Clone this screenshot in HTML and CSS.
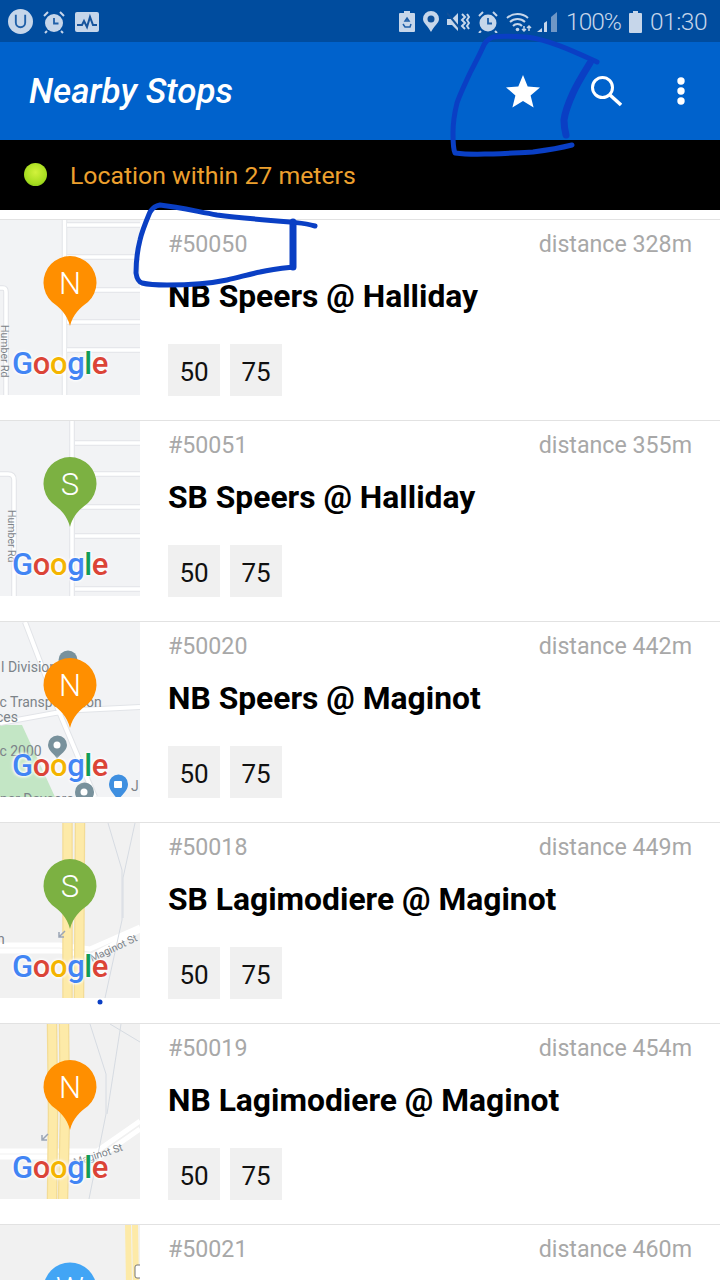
FILE: index.html
```html
<!DOCTYPE html>
<html>

<head>
    <title>Nearby Stops</title>
    <link rel="stylesheet" href="styles.css">
</head>

<body>

    <div class="statusbar">
        <div class="status-group">
            <svg class="st-icon" width="25" height="25" viewBox="0 0 24 24">
                <circle cx="12" cy="12" r="12" fill="#c6d6ea" />
                <path d="M7.500 5.500v7.500a4.500 4.500 0 0 0 9 0V5.500" fill="none" stroke="#1f5fa8" stroke-width="1.800" />
            </svg>
            <svg class="st-icon" width="22" height="24" viewBox="0 0 22 24">
                <circle cx="11" cy="13" r="9" fill="#c6d6ea" />
                <path d="M11 8v5.500h4.500" fill="none" stroke="#1f5fa8" stroke-width="1.800" />
                <path d="M1 6l4-4M21 6l-4-4M4 21l-2 2M18 21l2 2" stroke="#c6d6ea" stroke-width="2" />
            </svg>
            <svg class="st-icon" width="24" height="20" viewBox="0 0 24 20">
                <rect width="24" height="20" rx="2" fill="#c6d6ea" />
                <path d="M2 13h5l2-4 3 6 3-10 3 8h4" fill="none" stroke="#17549c" stroke-width="2" />
            </svg>
        </div>
        <div class="status-group status-right">
            <svg width="16" height="21" viewBox="0 0 16 21">
                <path d="M5 0h6v2h4a1 1 0 0 1 1 1v17a1 1 0 0 1-1 1H1a1 1 0 0 1-1-1V3a1 1 0 0 1 1-1h4z" fill="#c6d6ea" />
                <path d="M8 7l2 3H6zM4 13l2 3h3M12 13l-1 3H9" fill="none" stroke="#1f5fa8" stroke-width="1.500" />
            </svg>
            <svg width="16" height="21" viewBox="0 0 16 21">
                <path d="M8 21C5 15 0 12 0 8a8 8 0 0 1 16 0c0 4-5 7-8 13z" fill="#c6d6ea" />
                <circle cx="8" cy="8" r="3.500" fill="#0f5099" />
            </svg>
            <svg width="23" height="22" viewBox="0 0 23 22">
                <path d="M0 8h5l6-6v18l-6-6H0z" fill="#c6d6ea" />
                <path d="M0 2l14 17" stroke="#0f5099" stroke-width="2" />
                <path d="M15 3l3 3-3 3 3 3-3 3 3 3M20 3l2 3-2 3 2 3-2 3 2 3" fill="none" stroke="#c6d6ea" stroke-width="2" />
            </svg>
            <svg width="20" height="22" viewBox="0 0 20 22">
                <circle cx="10" cy="12" r="8.500" fill="#c6d6ea" />
                <path d="M10 7v5.500h4" fill="none" stroke="#1f5fa8" stroke-width="1.800" />
                <path d="M1 5l4-4M19 5l-4-4M3 20l-2 2M17 20l2 2" stroke="#c6d6ea" stroke-width="2" />
            </svg>
            <svg width="52" height="22" viewBox="0 0 52 22">
                <path d="M1 7a16 16 0 0 1 21 0M4 11a11 11 0 0 1 15 0M7 15a6 6 0 0 1 9 0" fill="none" stroke="#c6d6ea" stroke-width="2" />
                <circle cx="11.500" cy="18.500" r="1.800" fill="#c6d6ea" />
                <path d="M18 15v5M16 18l2 2 2-2M23 20v-5M21 17l2-2 2 2" fill="none" stroke="#c6d6ea" stroke-width="1.500" />
                <path d="M31 21l5-4v4zM38 21V12l3-2v11z" fill="#c6d6ea" />
                <path d="M45 6l6-5v20h-6z" fill="#6f97c6" />
            </svg>
            <span class="status-text pct">100%</span>
            <svg width="13" height="22" viewBox="0 0 13 22">
                <path d="M4 0h5v2h3a1 1 0 0 1 1 1v18a1 1 0 0 1-1 1H1a1 1 0 0 1-1-1V3a1 1 0 0 1 1-1h3z" fill="#c6d6ea" />
            </svg>
            <span class="status-text">01:30</span>
        </div>
    </div>

    <div class="toolbar">
        <span class="toolbar-title">Nearby Stops</span>
        <div class="toolbar-icons">
            <svg class="tb-star" width="34" height="33" viewBox="0 0 34 33">
                <path d="M17 0l4.700 11.500 12.300.9-9.400 8 3 12L17 26l-10.600 6.400 3-12-9.400-8 12.300-.9z" fill="#fff" />
            </svg>
            <svg class="tb-search" width="32" height="32" viewBox="0 0 32 32">
                <circle cx="12.500" cy="12.500" r="10" fill="none" stroke="#fff" stroke-width="3" />
                <path d="M20 20l11 10" stroke="#fff" stroke-width="3.500" />
            </svg>
            <svg class="tb-more" width="8" height="28" viewBox="0 0 8 28">
                <circle cx="4" cy="4" r="3.700" fill="#fff" />
                <circle cx="4" cy="14" r="3.700" fill="#fff" />
                <circle cx="4" cy="24" r="3.700" fill="#fff" />
            </svg>
        </div>
    </div>

    <div class="location-bar">
        <span class="gps-dot"></span>
        <span class="location-text">Location within 27 meters</span>
    </div>

    <div class="stops">

        <div class="stop">
            <div class="thumb thumb-grid">
                <svg width="140" height="175" viewBox="0 0 140 175">
                    <path d="M64.500 0v175M67 5h73M67 37h73M67 70h73M67 102h73M67 130h73M0 68h3q3 0 3 4v103" fill="none" stroke="#e2e4e8" stroke-width="5.500" />
                    <path d="M64.500 0v175M67 5h73M67 37h73M67 70h73M67 102h73M67 130h73M0 68h3q3 0 3 4v103" fill="none" stroke="#fff" stroke-width="3.500" />
                    <text class="map-label map-label-sm" transform="translate(0 105) rotate(90)" y="-1">Humber Rd</text>
                    <path class="pin-orange" d="M70 106c-3-12-10-18-18-24a26.500 26.500 0 1 1 36 0c-8 6-15 12-18 24z" />
                    <text class="pin-letter" x="70" y="74">N</text>
                </svg>
                <div class="google"><span class="g-blue">G</span><span class="g-red">o</span><span class="g-yellow">o</span><span class="g-blue">g</span><span class="g-green">l</span><span class="g-red">e</span></div>
            </div>
            <div class="stop-info">
                <div class="stop-top"><span class="stop-id">#50050</span><span class="stop-dist">distance 328m</span></div>
                <div class="stop-name">NB Speers @ Halliday</div>
                <div class="routes"><span class="route">50</span><span class="route">75</span></div>
            </div>
        </div>

        <div class="stop">
            <div class="thumb thumb-grid">
                <svg width="140" height="175" viewBox="0 0 140 175">
                    <path d="M72 0v175M75 22h65M75 53h65M75 86h65M75 115h65M75 168h65M0 53h8q6 0 6 6v116" fill="none" stroke="#e2e4e8" stroke-width="5.500" />
                    <path d="M72 0v175M75 22h65M75 53h65M75 86h65M75 115h65M75 168h65M0 53h8q6 0 6 6v116" fill="none" stroke="#fff" stroke-width="3.500" />
                    <text class="map-label map-label-sm" transform="translate(7 89) rotate(90)" y="-1">Humber Rd</text>
                    <path class="pin-green" d="M70 106c-3-12-10-18-18-24a26.500 26.500 0 1 1 36 0c-8 6-15 12-18 24z" />
                    <text class="pin-letter" x="70" y="74">S</text>
                </svg>
                <div class="google"><span class="g-blue">G</span><span class="g-red">o</span><span class="g-yellow">o</span><span class="g-blue">g</span><span class="g-green">l</span><span class="g-red">e</span></div>
            </div>
            <div class="stop-info">
                <div class="stop-top"><span class="stop-id">#50051</span><span class="stop-dist">distance 355m</span></div>
                <div class="stop-name">SB Speers @ Halliday</div>
                <div class="routes"><span class="route">50</span><span class="route">75</span></div>
            </div>
        </div>

        <div class="stop">
            <div class="thumb thumb-grid">
                <svg width="140" height="175" viewBox="0 0 140 175">
                    <path d="M0 103h22l33 72H0z" fill="#c3e6c5" />
                    <path d="M25 0l35 92 35 83M0 101l55-10 25-3 60-3" fill="none" stroke="#e2e4e8" stroke-width="6" />
                    <path d="M25 0l35 92 35 83M0 101l55-10 25-3 60-3" fill="none" stroke="#fff" stroke-width="4" />
                    <circle cx="68" cy="38" r="9.500" fill="#78919c" />
                    <text class="map-label" x="1" y="50">l Division</text>
                    <text class="map-label" x="-4" y="85">ic Transportation</text>
                    <text class="map-label" x="-4" y="100">ces</text>
                    <text class="map-label" x="-4" y="134">ic 2000</text>
                    <path d="M57 137c-2-5-9-8-9-14a9.500 9.500 0 0 1 19 0c0 6-7 9-10 14z" fill="#78919c" />
                    <circle cx="57" cy="123" r="3.500" fill="#fff" />
                    <path d="M84 185c-5-6-9-9-9-15a9.500 9.500 0 0 1 19 0c0 6-4 9-10 15z" fill="#78919c" />
                    <circle cx="84" cy="170" r="3.500" fill="#fff" />
                    <path d="M118 178c-5-7-9-10-9-16a9.500 9.500 0 0 1 19 0c0 6-4 9-10 16z" fill="#3f8fe0" />
                    <rect x="114" y="159" width="8" height="7" rx="1" fill="#fff" />
                    <text class="map-label" x="131" y="169">J</text>
                    <text class="map-label" x="0" y="182">ner Daycare</text>
                    <path class="pin-orange" d="M70 106c-3-12-10-18-18-24a26.500 26.500 0 1 1 36 0c-8 6-15 12-18 24z" />
                    <text class="pin-letter" x="70" y="74">N</text>
                </svg>
                <div class="google"><span class="g-blue">G</span><span class="g-red">o</span><span class="g-yellow">o</span><span class="g-blue">g</span><span class="g-green">l</span><span class="g-red">e</span></div>
            </div>
            <div class="stop-info">
                <div class="stop-top"><span class="stop-id">#50020</span><span class="stop-dist">distance 442m</span></div>
                <div class="stop-name">NB Speers @ Maginot</div>
                <div class="routes"><span class="route">50</span><span class="route">75</span></div>
            </div>
        </div>

        <div class="stop">
            <div class="thumb thumb-road">
                <svg width="140" height="175" viewBox="0 0 140 175">
                    <path d="M0 122h60l30 4 50-22M0 128h60l32 5 48-26" fill="none" stroke="#fff" stroke-width="5" />
                    <path d="M108 0l14 47v50l-17 78M135 0l-12 55v40" fill="none" stroke="#d6dbe2" stroke-width="1" />
                    <path d="M67.500 0v175M80 0l-1 175" fill="none" stroke="#f3dc96" stroke-width="10.500" />
                    <path d="M67.500 0v175M80 0l-1 175" fill="none" stroke="#fdeaa8" stroke-width="8" />
                    <path d="M65 108l-6 6m0-5v5h5" fill="none" stroke="#9aa5b5" stroke-width="1.500" />
                    <text class="map-label" x="-3" y="121">n</text>
                    <text class="map-label map-label-sm" transform="translate(92 139) rotate(-25)">Maginot St</text>
                    <path class="pin-green" d="M70 106c-3-12-10-18-18-24a26.500 26.500 0 1 1 36 0c-8 6-15 12-18 24z" />
                    <text class="pin-letter" x="70" y="74">S</text>
                </svg>
                <div class="google"><span class="g-blue">G</span><span class="g-red">o</span><span class="g-yellow">o</span><span class="g-blue">g</span><span class="g-green">l</span><span class="g-red">e</span></div>
            </div>
            <div class="stop-info">
                <div class="stop-top"><span class="stop-id">#50018</span><span class="stop-dist">distance 449m</span></div>
                <div class="stop-name">SB Lagimodiere @ Maginot</div>
                <div class="routes"><span class="route">50</span><span class="route">75</span></div>
            </div>
        </div>

        <div class="stop">
            <div class="thumb thumb-road">
                <svg width="140" height="175" viewBox="0 0 140 175">
                    <path d="M0 127h35q10 0 22 0h40l43-30M0 133h60l40 0 40-28" fill="none" stroke="#fff" stroke-width="5" />
                    <path d="M90 0l16 50v40l-17 85M121 0l-14 90M110 0l30 18" fill="none" stroke="#d6dbe2" stroke-width="1" />
                    <path d="M52 0l1 90-1 85M64 0l1 90-2 85" fill="none" stroke="#f3dc96" stroke-width="10.500" />
                    <path d="M52 0l1 90-1 85M64 0l1 90-2 85" fill="none" stroke="#fdeaa8" stroke-width="8" />
                    <path d="M48 110l-6 6m0-5v5h5" fill="none" stroke="#9aa5b5" stroke-width="1.500" />
                    <text class="map-label map-label-sm" transform="translate(75 142) rotate(-18)">Maginot St</text>
                    <path class="pin-orange" d="M70 106c-3-12-10-18-18-24a26.500 26.500 0 1 1 36 0c-8 6-15 12-18 24z" />
                    <text class="pin-letter" x="70" y="74">N</text>
                </svg>
                <div class="google"><span class="g-blue">G</span><span class="g-red">o</span><span class="g-yellow">o</span><span class="g-blue">g</span><span class="g-green">l</span><span class="g-red">e</span></div>
            </div>
            <div class="stop-info">
                <div class="stop-top"><span class="stop-id">#50019</span><span class="stop-dist">distance 454m</span></div>
                <div class="stop-name">NB Lagimodiere @ Maginot</div>
                <div class="routes"><span class="route">50</span><span class="route">75</span></div>
            </div>
        </div>

        <div class="stop">
            <div class="thumb thumb-road">
                <svg width="140" height="175" viewBox="0 0 140 175">
                    <path d="M128 0l1 60M135 0l1 60" fill="none" stroke="#fdeaa8" stroke-width="6" />
                    <rect x="135" y="40" width="8" height="13" rx="2" fill="#fff" stroke="#777" />
                    <circle cx="70" cy="64" r="26.500" fill="#42a5f5" />
                    <text class="pin-letter" x="70" y="74">W</text>
                </svg>
            </div>
            <div class="stop-info">
                <div class="stop-top"><span class="stop-id">#50021</span><span class="stop-dist">distance 460m</span></div>
            </div>
        </div>

    </div>

    <!-- marcas de caneta por cima da tela -->
    <svg class="scribbles" width="720" height="1280" viewBox="0 0 720 1280">
        <path d="M597 62C575 52 550 40 527 37C512 36 500 36 493 37C486 40 484 44 483 47C478 58 474 65 470 73C464 86 460 94 457 103C454 115 453 124 453 133C453 145 454 151 455 153C470 155 482 154 493 154C510 153 522 153 533 152C548 150 560 148 572 145" class="scribble" />
        <path d="M590 63C582 76 577 84 573 93C568 104 565 112 564 120C564 126 565 131 566 135" class="scribble scribble-thick" />
        <path d="M315 226C305 223 298 223 290 222C265 220 240 218 217 215C195 211 178 207 160 205C154 206 152 209 150 212C145 224 142 231 140 240C137 252 136 263 136 273C137 280 139 282 142 283C150 285 158 285 167 285C190 285 208 284 227 280C240 277 250 274 260 272C272 269 283 268 293 267" class="scribble" />
        <path d="M293 222V267" class="scribble scribble-thick" />
        <circle cx="100" cy="1002" r="2.500" fill="#0a3fc4" />
    </svg>

</body>

</html>
```

FILE: styles.css
```css
* {
    box-sizing: border-box;
}

html,
body {
    margin: 0;
    padding: 0;
    height: 1280px;
    overflow: hidden;
    background-color: #fff;
    font-family: Roboto, "Liberation Sans", sans-serif;
}

.statusbar {
    height: 42px;
    padding: 1px 13px 0 8px;
    display: flex;
    justify-content: space-between;
    align-items: center;
    background-color: #004c9e;
}

.status-group {
    display: flex;
    align-items: center;
    gap: 10px;
}

.status-right {
    gap: 8px;
}

.status-text {
    color: #c6d6ea;
    font-size: 24.500px;
    font-weight: 300;
    letter-spacing: -0.5px;
}

.pct {
    letter-spacing: -1px;
}

.toolbar {
    height: 98px;
    padding: 0 29px;
    display: flex;
    justify-content: space-between;
    align-items: center;
    background-color: #0062cc;
}

.toolbar-title {
    color: #fff;
    font-size: 35px;
    font-weight: 500;
    font-style: italic;
}

.toolbar-icons {
    display: flex;
    align-items: center;
}

.tb-star {
    margin-right: 50px;
}

.tb-search {
    margin-right: 55px;
}

.tb-more {
    margin-right: 6px;
}

.location-bar {
    height: 70px;
    padding-left: 24px;
    display: flex;
    align-items: center;
    background-color: #000;
}

.gps-dot {
    width: 23px;
    height: 23px;
    margin-right: 23px;
    margin-top: -2px;
    border-radius: 50%;
    background: radial-gradient(circle at 50% 40%, #d2f23c, #a4dc1e 65%, #6aa81a);
}

.location-text {
    color: #eda02e;
    font-size: 24.800px;
}

.stops {
    height: 1070px;
    padding-top: 9px;
    overflow: hidden;
}

.stop {
    height: 201px;
    border-top: 1px solid #e2e2e2;
    display: flex;
}

.thumb {
    position: relative;
    width: 140px;
    height: 175px;
    flex-shrink: 0;
    overflow: hidden;
    background-color: #f1f1f1;
}

.thumb-grid {
    background-color: #f2f3f5;
}

.thumb svg {
    display: block;
}

.pin-orange {
    fill: #ff8f00;
}

.pin-green {
    fill: #7cb142;
}

.pin-letter {
    fill: #fff;
    font-size: 31px;
    font-weight: 300;
    text-anchor: middle;
}

.map-label {
    fill: #7c8389;
    font-size: 14px;
}

.map-label-sm {
    font-size: 10.500px;
}

/* logo do mapa */
.google {
    position: absolute;
    left: 12px;
    top: 124px;
    font-size: 31px;
    line-height: 40px;
    font-weight: 500;
    letter-spacing: -0.4px;
    text-shadow: 0 0 3px #fff, 0 0 3px #fff, 0 0 4px #fff;
}

.g-blue {
    color: #4285f4;
}

.g-red {
    color: #db4437;
}

.g-yellow {
    color: #f4b400;
}

.g-green {
    color: #0f9d58;
}

.stop-info {
    flex: 1;
    padding: 0 28px;
}

.stop-top {
    height: 48px;
    display: flex;
    justify-content: space-between;
    align-items: center;
    color: #a8a8a8;
    font-size: 23.200px;
}

.stop-name {
    height: 56px;
    line-height: 57px;
    color: #000;
    font-size: 31.800px;
    font-weight: 700;
}

.routes {
    margin-top: 20px;
    display: flex;
    gap: 10px;
}

.route {
    width: 52px;
    height: 52px;
    padding-top: 4px;
    display: flex;
    justify-content: center;
    align-items: center;
    color: #111;
    font-size: 26px;
    background-color: #f0f0f0;
}

.scribbles {
    position: absolute;
    left: 0;
    top: 0;
    pointer-events: none;
}

.scribble {
    fill: none;
    stroke: #0a3fc4;
    stroke-width: 5;
    stroke-linecap: round;
    stroke-linejoin: round;
}

.scribble-thick {
    stroke-width: 7;
}
```
